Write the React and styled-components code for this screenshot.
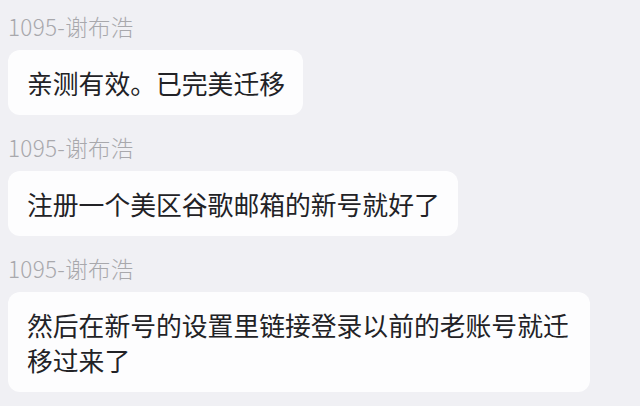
import React from "react";
import styled, { createGlobalStyle } from "styled-components";

const GlobalStyle = createGlobalStyle`
  html, body {
    margin: 0;
    padding: 0;
    background: #f0f0f4;
  }
  body {
    font-family: "Noto Sans CJK SC", "Noto Sans", sans-serif;
  }
`;

const Page = styled.div`
  width: 640px;
  height: 406px;
  overflow: hidden;
  box-sizing: border-box;
  padding: 12px 0 0 8px;
  background: #f0f0f4;
  display: flex;
  flex-direction: column;
  align-items: flex-start;
`;

const Message = styled.div`
  display: flex;
  flex-direction: column;
  align-items: flex-start;
  gap: 10px;
  margin-bottom: 18px;
`;

const Sender = styled.div`
  font-size: 22.5px;
  line-height: 28px;
  letter-spacing: 0.3px;
  color: #a8a8ac;
  font-weight: 300;
`;

const Bubble = styled.div`
  background: #fdfdfe;
  border-radius: 12px;
  padding: 15px 18px 15px 19px;
  max-width: 582px;
  box-sizing: border-box;
  font-size: 25.8px;
  line-height: 35px;
  color: #222226;
`;

const messages = [
  { from: "1095-谢布浩", text: "亲测有效。已完美迁移" },
  { from: "1095-谢布浩", text: "注册一个美区谷歌邮箱的新号就好了" },
  {
    from: "1095-谢布浩",
    text: "然后在新号的设置里链接登录以前的老账号就迁移过来了",
  },
];

export default function App() {
  return (
    <>
      <GlobalStyle />
      <Page>
        {messages.map((m, i) => (
          <Message key={i}>
            <Sender>{m.from}</Sender>
            <Bubble>{m.text}</Bubble>
          </Message>
        ))}
      </Page>
    </>
  );
}
